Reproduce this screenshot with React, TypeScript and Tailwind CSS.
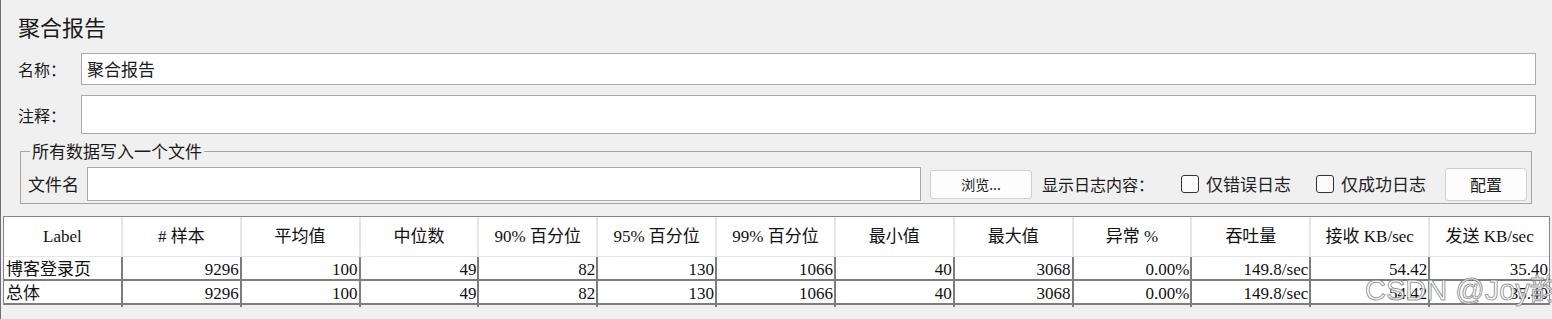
const columns = [
  "Label",
  "# 样本",
  "平均值",
  "中位数",
  "90% 百分位",
  "95% 百分位",
  "99% 百分位",
  "最小值",
  "最大值",
  "异常 %",
  "吞吐量",
  "接收 KB/sec",
  "发送 KB/sec",
];

const rows = [
  ["博客登录页", "9296", "100", "49", "82", "130", "1066", "40", "3068", "0.00%", "149.8/sec", "54.42", "35.40"],
  ["总体", "9296", "100", "49", "82", "130", "1066", "40", "3068", "0.00%", "149.8/sec", "54.42", "35.40"],
];

const cjk = "font-['Noto_Sans_CJK_SC',sans-serif]";

const Checkbox = ({ label, gap, width }: { label: string; gap: string; width: string }) => (
  <>
    <span className={`${gap} w-[18px] h-[18px] shrink-0 rounded-[3px] border border-[#333333] bg-[#fbfbfb]`} />
    <span className={`ml-[7px] ${width} shrink-0 text-[17px] leading-[20px] text-[#222222]`}>{label}</span>
  </>
);

const AggregateReport = () => {
  return (
    <div className={`relative w-[1552px] h-[319px] overflow-hidden bg-[#f0f0f0] border-l border-[#6f6f6f] ${cjk} text-[#1a1a1a]`}>
      <div className="pl-[17px] pt-[11px] text-[22px] leading-[30px]">聚合报告</div>

      <div className="mt-[12px] flex items-center pl-[17px] pr-[16px]">
        <span className="w-[63px] text-[16px]">名称：</span>
        <div className="flex-1 h-[32px] flex items-center pl-[5px] bg-white border border-[#a9a9a9] text-[17px]">
          聚合报告
        </div>
      </div>

      <div className="mt-[10px] flex items-center pl-[17px] pr-[16px]">
        <span className="w-[63px] text-[16px]">注释：</span>
        <div className="flex-1 h-[39px] bg-white border border-[#a9a9a9]" />
      </div>

      <fieldset className="mt-[7px] ml-[19px] w-[1512px] border border-[#a3a3a3] pl-[7px] pr-[4px] pb-[2px]">
        <legend className="ml-[2px] px-[2px] text-[17px] leading-[20px]">所有数据写入一个文件</legend>
        <div className="mt-[6px] flex items-center h-[34px]">
          <span className="w-[51px] shrink-0 text-[17px]">文件名</span>
          <div className="ml-[8px] flex-1 h-[34px] bg-white border border-[#a9a9a9]" />
          <button className="ml-[9px] w-[102px] h-[29px] shrink-0 rounded-[3px] border border-[#cfcfcf] bg-[#fdfdfd] text-[14px]">
            浏览...
          </button>
          <span className="ml-[10px] w-[117px] shrink-0 text-[16px] whitespace-nowrap">显示日志内容：</span>
          <Checkbox label="仅错误日志" gap="ml-[22px]" width="w-[89px]" />
          <Checkbox label="仅成功日志" gap="ml-[21px]" width="w-[88px]" />
          <button className="ml-[16px] w-[82px] h-[33px] shrink-0 rounded-[3px] border border-[#cfcfcf] bg-[#fdfdfd] text-[16px]">
            配置
          </button>
        </div>
      </fieldset>

      <div className="mt-[12px] ml-[2px] w-[1547px] border-t border-l border-r border-[#858585] bg-white font-['Liberation_Serif','Noto_Sans_CJK_SC',serif] text-[17px] text-[#111111]">
        <div className="grid grid-cols-[repeat(13,minmax(0,1fr))] h-[40px] border-b border-[#e6e6e6]">
          {columns.map((c) => (
            <div
              key={c}
              className="flex items-center justify-center whitespace-nowrap border-r-2 border-[#e6e6e6] last:border-r-0"
            >
              {c}
            </div>
          ))}
        </div>
        {rows.map((r, i) => (
          <div key={i} className="grid grid-cols-[repeat(13,minmax(0,1fr))] h-[24px] border-b-2 border-[#7d7d7d]">
            {r.map((v, j) => (
              <div
                key={j}
                className={`flex items-center whitespace-nowrap border-r-2 border-[#7d7d7d] last:border-r-0 ${
                  j === 0 ? "pl-[2px] justify-start" : "pr-[1px] justify-end"
                }`}
              >
                {v}
              </div>
            ))}
          </div>
        ))}
      </div>

      {/* watermark */}
      <div className="absolute left-[1364px] top-[276px] whitespace-nowrap font-['Liberation_Sans','Noto_Sans_CJK_SC',sans-serif] text-[29px] leading-none text-white/80 [-webkit-text-stroke:1px_rgba(110,110,110,0.7)]">
        CSDN @Joy韵
      </div>
    </div>
  );
};

export default AggregateReport;
